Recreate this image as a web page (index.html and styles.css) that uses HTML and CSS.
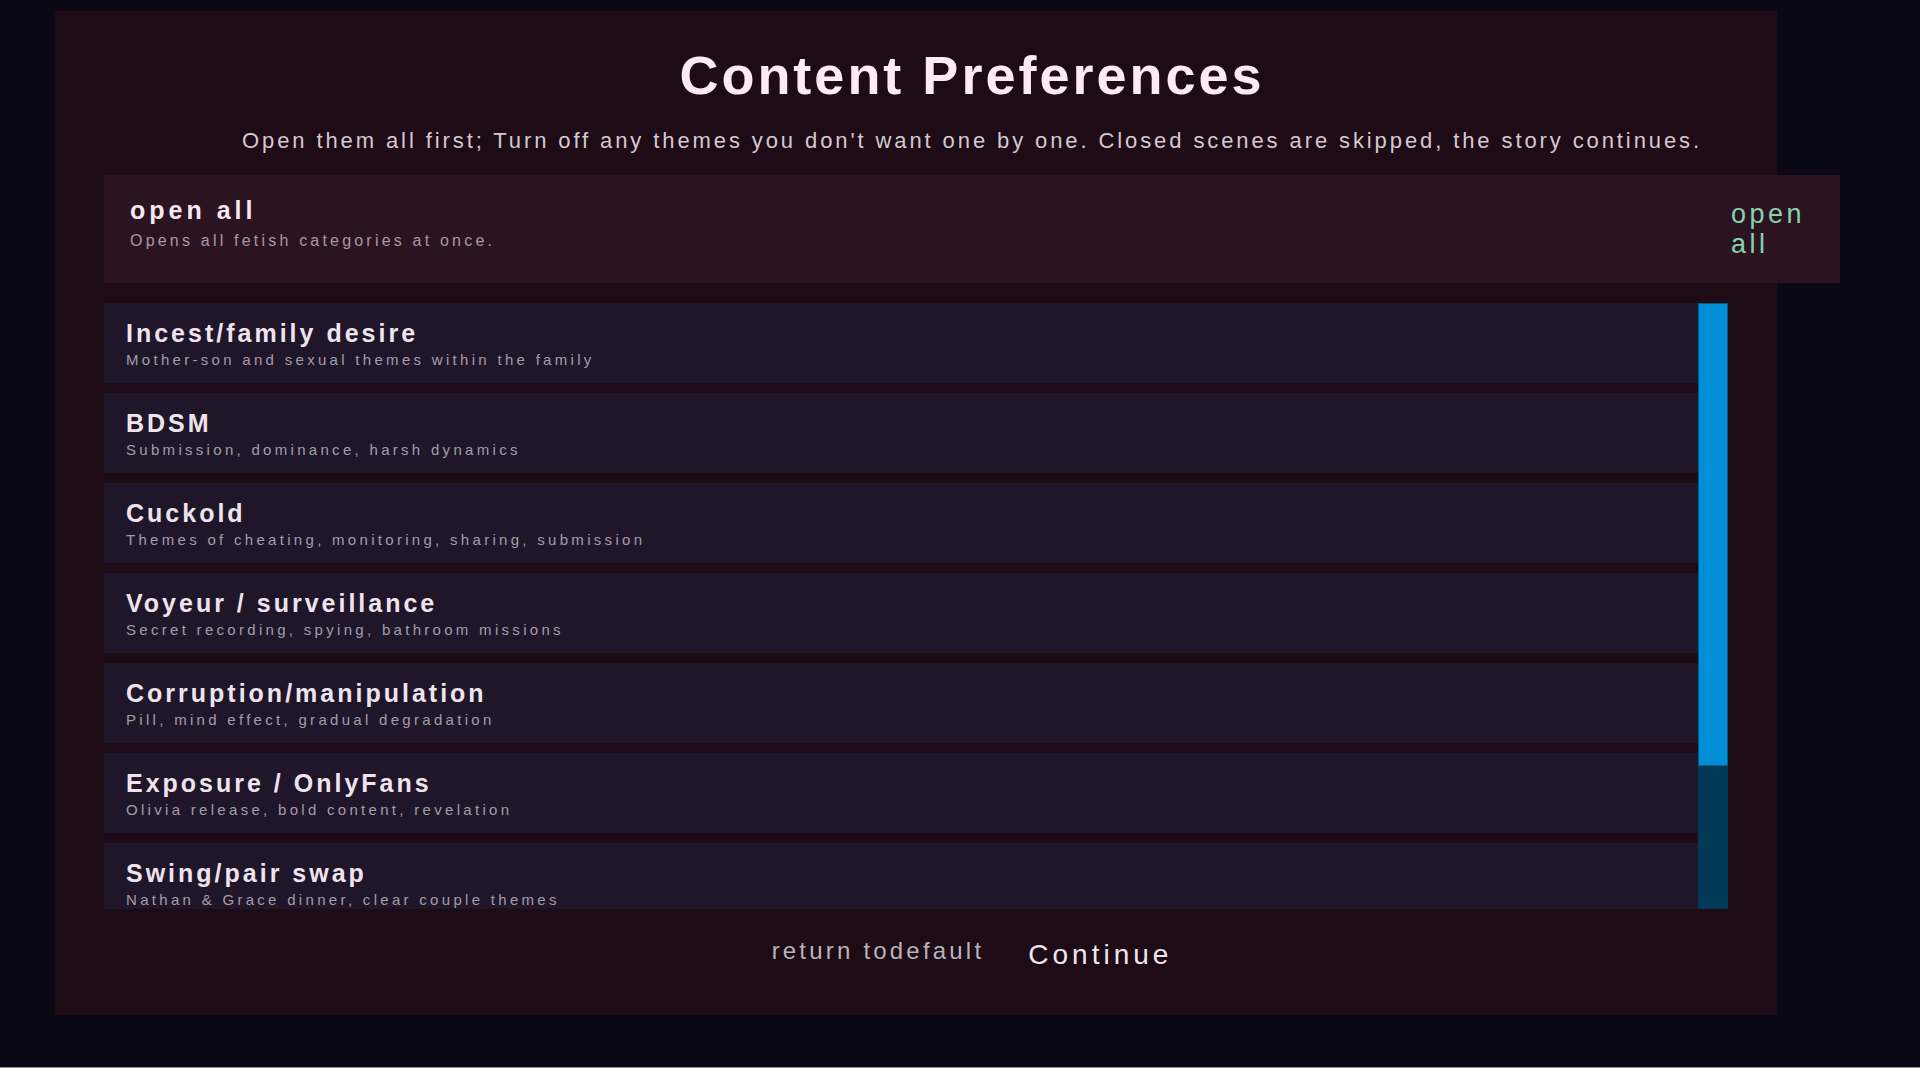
FILE: index.html
```html
<!DOCTYPE html>
<html lang="en">
  <head>
    <meta charset="UTF-8" />
    <meta name="viewport" content="width=device-width, initial-scale=1.0" />
    <title>Content Preferences</title>
    <link rel="stylesheet" href="styles.css">
  </head>
  <body>
    <div class="screen">
      <div class="panel">
        <div class="column">
          <h1 class="title">Content Preferences</h1>
          <p class="subtitle">Open them all first; Turn off any themes you don't want one by one. Closed scenes are skipped, the story continues.</p>

          <div class="open-all-row">
            <div class="open-all-text">
              <h3>open all</h3>
              <p>Opens all fetish categories at once.</p>
            </div>
            <button class="open-all-button" id="openAllBtn">open all</button>
          </div>

          <div class="list-wrap">
            <ul class="pref-list" id="prefList">
              <li class="pref-item">
                <h4>Incest/family desire</h4>
                <p>Mother-son and sexual themes within the family</p>
              </li>
              <li class="pref-item">
                <h4>BDSM</h4>
                <p>Submission, dominance, harsh dynamics</p>
              </li>
              <li class="pref-item">
                <h4>Cuckold</h4>
                <p>Themes of cheating, monitoring, sharing, submission</p>
              </li>
              <li class="pref-item">
                <h4>Voyeur / surveillance</h4>
                <p>Secret recording, spying, bathroom missions</p>
              </li>
              <li class="pref-item">
                <h4>Corruption/manipulation</h4>
                <p>Pill, mind effect, gradual degradation</p>
              </li>
              <li class="pref-item">
                <h4>Exposure / OnlyFans</h4>
                <p>Olivia release, bold content, revelation</p>
              </li>
              <li class="pref-item">
                <h4>Swing/pair swap</h4>
                <p>Nathan &amp; Grace dinner, clear couple themes</p>
              </li>
            </ul>
            <div class="scrollbar">
              <div class="scrollbar-thumb"></div>
            </div>
          </div>

          <div class="footer-actions">
            <button class="reset-button" id="resetBtn">return todefault</button>
            <button class="continue-button" id="continueBtn">Continue</button>
          </div>
        </div>
      </div>
    </div>
  </body>
</html>
```

FILE: styles.css
```css
html {
  background-color: #ffffff;
}

body {
  font-family: "Liberation Sans", Arial, sans-serif;
  margin: 0;
  padding: 0;
}

.screen {
  box-sizing: border-box;
  height: 1068px;
  padding: 11px 0 0 55px;
  background-color: #0a0814;
  border-bottom: 1px solid #8d8c94;
}

.panel {
  box-sizing: border-box;
  width: 1722px;
  height: 1004px;
  padding-left: 49px;
  background-color: #1d0c16;
}

.column {
  width: 1736px;
}

.title {
  margin: 0;
  padding-top: 34px;
  font-size: 54px;
  line-height: 60px;
  font-weight: bold;
  letter-spacing: 3px;
  text-align: center;
  color: #ffe9f2;
}

.subtitle {
  margin: 23px 0 0;
  font-size: 22px;
  line-height: 26px;
  letter-spacing: 2.9px;
  text-align: center;
  color: #d4c8d1;
}

/* open all row */
.open-all-row {
  box-sizing: border-box;
  display: flex;
  justify-content: space-between;
  align-items: center;
  height: 108px;
  margin-top: 21px;
  padding: 0 19px 0 26px;
  background-color: #2b1320;
}

.open-all-text {
  align-self: flex-start;
  padding-top: 20px;
}

.open-all-text h3 {
  margin: 0;
  font-size: 25px;
  line-height: 30px;
  letter-spacing: 4px;
  color: #f6e8f0;
}

.open-all-text p {
  margin: 6px 0 0;
  font-size: 16px;
  line-height: 20px;
  letter-spacing: 3.2px;
  color: #a898a6;
}

.open-all-button {
  width: 90px;
  padding: 0;
  border: none;
  background: none;
  font-family: inherit;
  font-size: 27px;
  line-height: 30px;
  letter-spacing: 3.5px;
  text-align: left;
  color: #84d3b1;
  cursor: pointer;
}

/* list */
.list-wrap {
  display: flex;
  width: 1624px;
  height: 606px;
  margin-top: 20px;
}

.pref-list {
  flex: 1;
  margin: 0;
  padding: 0;
  list-style: none;
  overflow: hidden;
}

.scrollbar {
  display: flex;
  flex-direction: column;
  width: 30px;
  background-color: #013a56;
}

.scrollbar-thumb {
  box-sizing: border-box;
  height: 463px;
  background-color: #008fd6;
  border: 1px solid #0a5a82;
}

.pref-item {
  box-sizing: border-box;
  height: 80px;
  margin-bottom: 10px;
  padding: 16px 22px 0;
  background-color: #1f1729;
}

.pref-item h4 {
  margin: 0;
  font-size: 25px;
  line-height: 28px;
  letter-spacing: 3px;
  color: #eee4ee;
}

.pref-item p {
  margin: 4px 0 0;
  font-size: 15px;
  line-height: 18px;
  letter-spacing: 3.3px;
  color: #a59ba8;
}

/* bottom buttons */
.footer-actions {
  display: flex;
  justify-content: center;
  align-items: flex-start;
  gap: 44px;
  padding-top: 27px;
}

.reset-button,
.continue-button {
  padding: 0;
  border: none;
  background: none;
  font-family: inherit;
  cursor: pointer;
}

.reset-button {
  font-size: 24px;
  line-height: 30px;
  letter-spacing: 3.2px;
  color: #bab2ba;
}

.continue-button {
  margin-top: 2px;
  font-size: 28px;
  line-height: 34px;
  letter-spacing: 4px;
  color: #efe6ee;
}
```
